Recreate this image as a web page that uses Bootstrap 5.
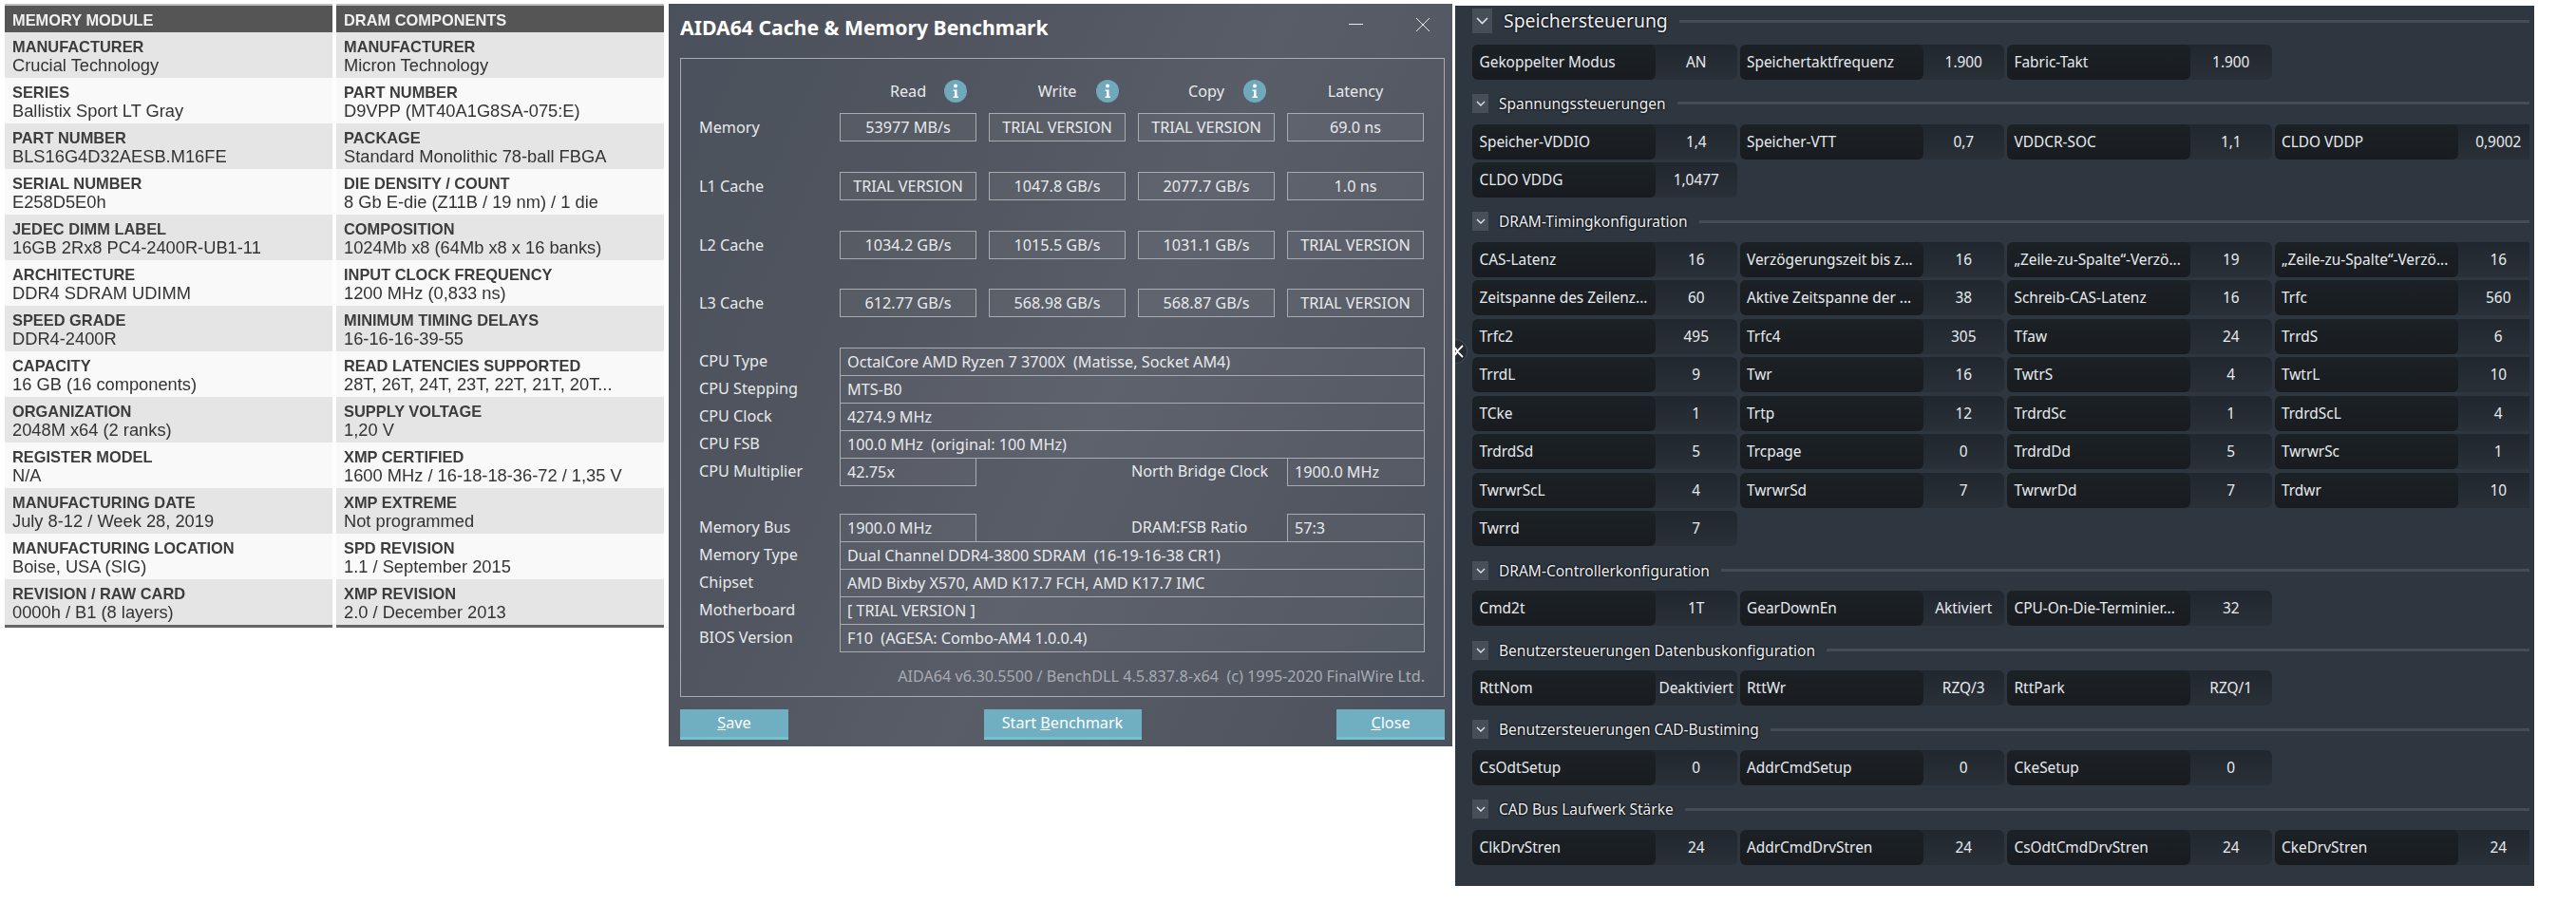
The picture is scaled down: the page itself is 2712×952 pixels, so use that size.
<!DOCTYPE html>
<html lang="de">
<head>
<meta charset="utf-8">
<title>Memory</title>
<link href="https://cdn.jsdelivr.net/npm/bootstrap@5.3.0/dist/css/bootstrap.min.css" rel="stylesheet">
<style>
body{background:#fff;margin:0;width:2712px;height:952px;overflow:hidden}
.spec-wrap{width:694px;margin:4px 0 0 5px;gap:4px;font-family:"Liberation Sans",Arial,sans-serif;flex:none;filter:blur(.35px)}
.spec-col{width:345px;flex:none}
.spec-head{height:30px;background:#555;color:#f0f0f0;font-weight:700;font-size:16.4px;line-height:30px;padding-left:8px;border-top:2px solid #bdbdbd}
.spec-row{height:48px;padding:5px 0 0 8px;color:#333;background:#f9f9f9;font-size:18.3px;line-height:20px;white-space:nowrap}
.spec-row:nth-child(odd){background:#e5e5e5}
.spec-row b{display:block;font-size:16.4px;color:#3c3c3c}
.spec-foot{height:3px;background:#666}
.win{width:825px;height:782px;margin:4px 0 0 5px;flex:none;background:linear-gradient(115deg,#4b515c 0%,#50555f 30%,#595d68 55%,#4b515c 100%);color:#e8eaec;font-family:"Noto Sans",sans-serif;font-size:16.2px}
.win-bar{height:57px;padding:0 23px 0 12px}
.win-title{font-size:21.2px;font-weight:700;color:#fff;line-height:50px;margin-top:-7px}
.win-ctrl{margin-top:-14px;gap:55px}
.win-panel{width:805px;height:673px;margin-left:12px;border:1px solid #a9abb1;padding:16px 20px 0 19px}
.bm-grid{display:grid;grid-template-columns:135px repeat(4,144px);column-gap:13px}
.bm-head{height:36px;display:grid;grid-template-columns:1fr auto 1fr;align-items:center;text-align:center;margin-bottom:5px}
.bm-head svg{justify-self:end}
.ic-a svg{margin-right:10px}.ic-b svg{margin-right:7px}.ic-c svg{margin-right:9px}
.bm-row{height:30px;margin-bottom:32px;align-items:center}
.bm-row.tight{margin-bottom:31px}
.bm-box{height:30px;line-height:28px;border:1px solid #a9abb1;background:rgba(255,255,255,.045);text-align:center;white-space:nowrap}
.bm-lab{line-height:30px}
.info-row{display:grid;grid-template-columns:135px 144px 1fr 145px;column-gap:13px;height:30px;margin-bottom:-1px;line-height:28px}
.info-box{border:1px solid #a9abb1;background:rgba(255,255,255,.035);padding-left:7px;height:30px}
.info-wide{grid-column:2 / 5}
.info-side{padding-left:150px;white-space:nowrap}
.info-gap{height:30px}
.win-note{color:#a8abb1;text-align:right;margin-top:11px;line-height:30px}
.win-btns{margin:13px 8px 0 12px;height:32px}
.win-btn{background:#70aec1;border-bottom:3px solid #72c3d0;color:#fff;height:32px;line-height:28px;text-align:center;width:114px}
.win-btn.wide{width:166px}
.mb-panel{width:1136px;height:927px;margin:6px 0 0 3px;padding:3px 5px 0 18px;flex:none;background:#2e3640;color:#e8ebee;font-family:"Noto Sans",sans-serif;font-size:15.4px;overflow:hidden}
.sec-head{height:20px;margin-top:15.2px}
.sec-head.big{height:26px;margin-top:0}
.sec-chev{width:17px;height:20px;background:#464e58;flex:none}
.big .sec-chev{width:21px;height:26px}
.sec-title{margin:0 12px 0 11px;font-size:15.5px;color:#eef0f2;text-shadow:0 0 2px #000,0 0 2px #000;line-height:20px}
.big .sec-title{font-size:19.4px;margin-left:12px}
.sec-rule{height:3px;background:#444c57;flex:1 1 auto}
.cell-grid{display:grid;grid-template-columns:repeat(4,278.5px);gap:3.5px 3px;margin-top:11.7px;overflow:hidden}
.cellx{height:37px;display:flex;border-radius:6px;background:linear-gradient(#21272e,#2a3037);line-height:37px;white-space:nowrap}
.cellx-l{width:193px;flex:none;padding-left:7.5px;border-radius:6px;background:linear-gradient(#1c2126,#181c20);overflow:hidden}
.cellx-v{flex:1 1 auto;text-align:center}
.tab-knob{position:absolute;left:1532px;top:357px;width:13px;height:26px;border-radius:0 13px 13px 0;background:#262c33;border:1px solid #454c55;border-left:0}
</style>
</head>
<body>
<div class="d-flex align-items-start">
  <div class="spec-wrap d-flex">
    <div class="spec-col">
      <div class="spec-head">MEMORY MODULE</div>
      <div>
        <div class="spec-row"><b>MANUFACTURER</b>Crucial Technology</div>
        <div class="spec-row"><b>SERIES</b>Ballistix Sport LT Gray</div>
        <div class="spec-row"><b>PART NUMBER</b>BLS16G4D32AESB.M16FE</div>
        <div class="spec-row"><b>SERIAL NUMBER</b>E258D5E0h</div>
        <div class="spec-row"><b>JEDEC DIMM LABEL</b>16GB 2Rx8 PC4-2400R-UB1-11</div>
        <div class="spec-row"><b>ARCHITECTURE</b>DDR4 SDRAM UDIMM</div>
        <div class="spec-row"><b>SPEED GRADE</b>DDR4-2400R</div>
        <div class="spec-row"><b>CAPACITY</b>16 GB (16 components)</div>
        <div class="spec-row"><b>ORGANIZATION</b>2048M x64 (2 ranks)</div>
        <div class="spec-row"><b>REGISTER MODEL</b>N/A</div>
        <div class="spec-row"><b>MANUFACTURING DATE</b>July 8-12 / Week 28, 2019</div>
        <div class="spec-row"><b>MANUFACTURING LOCATION</b>Boise, USA (SIG)</div>
        <div class="spec-row"><b>REVISION / RAW CARD</b>0000h / B1 (8 layers)</div>
      </div>
      <div class="spec-foot"></div>
    </div>
    <div class="spec-col">
      <div class="spec-head">DRAM COMPONENTS</div>
      <div>
        <div class="spec-row"><b>MANUFACTURER</b>Micron Technology</div>
        <div class="spec-row"><b>PART NUMBER</b>D9VPP (MT40A1G8SA-075:E)</div>
        <div class="spec-row"><b>PACKAGE</b>Standard Monolithic 78-ball FBGA</div>
        <div class="spec-row"><b>DIE DENSITY / COUNT</b>8 Gb E-die (Z11B / 19 nm) / 1 die</div>
        <div class="spec-row"><b>COMPOSITION</b>1024Mb x8 (64Mb x8 x 16 banks)</div>
        <div class="spec-row"><b>INPUT CLOCK FREQUENCY</b>1200 MHz (0,833 ns)</div>
        <div class="spec-row"><b>MINIMUM TIMING DELAYS</b>16-16-16-39-55</div>
        <div class="spec-row"><b>READ LATENCIES SUPPORTED</b>28T, 26T, 24T, 23T, 22T, 21T, 20T...</div>
        <div class="spec-row"><b>SUPPLY VOLTAGE</b>1,20 V</div>
        <div class="spec-row"><b>XMP CERTIFIED</b>1600 MHz / 16-18-18-36-72 / 1,35 V</div>
        <div class="spec-row"><b>XMP EXTREME</b>Not programmed</div>
        <div class="spec-row"><b>SPD REVISION</b>1.1 / September 2015</div>
        <div class="spec-row"><b>XMP REVISION</b>2.0 / December 2013</div>
      </div>
      <div class="spec-foot"></div>
    </div>
  </div>

  <div class="win">
    <div class="win-bar d-flex justify-content-between align-items-center">
      <div class="win-title">AIDA64 Cache &amp; Memory Benchmark</div>
      <div class="win-ctrl d-flex align-items-center">
        <svg width="15" height="15" viewBox="0 0 15 15"><path d="M0 7.5H15" stroke="#e8eaec" stroke-width="1"/></svg>
        <svg width="16" height="16" viewBox="0 0 16 16"><path d="M1 1L15 15M15 1L1 15" stroke="#e8eaec" stroke-width="1" fill="none"/></svg>
      </div>
    </div>
    <div class="win-panel">
      <div class="bm-grid">
        <div></div>
        <div class="bm-head ic-a"><span></span><span>Read</span><svg width="24" height="24" viewBox="0 0 24 24"><circle cx="12" cy="12" r="12" fill="#6fa9bb"/><circle cx="12" cy="6.5" r="2" fill="#fff"/><path d="M9.5 10.5H13.5V17.5H15V19H9.5V17.5H11V12H9.5Z" fill="#fff"/></svg></div>
        <div class="bm-head ic-b"><span></span><span>Write</span><svg width="24" height="24" viewBox="0 0 24 24"><circle cx="12" cy="12" r="12" fill="#6fa9bb"/><circle cx="12" cy="6.5" r="2" fill="#fff"/><path d="M9.5 10.5H13.5V17.5H15V19H9.5V17.5H11V12H9.5Z" fill="#fff"/></svg></div>
        <div class="bm-head ic-c"><span></span><span>Copy</span><svg width="24" height="24" viewBox="0 0 24 24"><circle cx="12" cy="12" r="12" fill="#6fa9bb"/><circle cx="12" cy="6.5" r="2" fill="#fff"/><path d="M9.5 10.5H13.5V17.5H15V19H9.5V17.5H11V12H9.5Z" fill="#fff"/></svg></div>
        <div class="bm-head"><span></span><span>Latency</span><span></span></div>
      </div>
      <div class="bm-grid bm-row"><div class="bm-lab">Memory</div><div class="bm-box">53977 MB/s</div><div class="bm-box">TRIAL VERSION</div><div class="bm-box">TRIAL VERSION</div><div class="bm-box">69.0 ns</div></div>
      <div class="bm-grid bm-row"><div class="bm-lab">L1 Cache</div><div class="bm-box">TRIAL VERSION</div><div class="bm-box">1047.8 GB/s</div><div class="bm-box">2077.7 GB/s</div><div class="bm-box">1.0 ns</div></div>
      <div class="bm-grid bm-row tight"><div class="bm-lab">L2 Cache</div><div class="bm-box">1034.2 GB/s</div><div class="bm-box">1015.5 GB/s</div><div class="bm-box">1031.1 GB/s</div><div class="bm-box">TRIAL VERSION</div></div>
      <div class="bm-grid bm-row"><div class="bm-lab">L3 Cache</div><div class="bm-box">612.77 GB/s</div><div class="bm-box">568.98 GB/s</div><div class="bm-box">568.87 GB/s</div><div class="bm-box">TRIAL VERSION</div></div>

      <div class="info-row"><div>CPU Type</div><div class="info-box info-wide">OctalCore AMD Ryzen 7 3700X&nbsp; (Matisse, Socket AM4)</div></div>
      <div class="info-row"><div>CPU Stepping</div><div class="info-box info-wide">MTS-B0</div></div>
      <div class="info-row"><div>CPU Clock</div><div class="info-box info-wide">4274.9 MHz</div></div>
      <div class="info-row"><div>CPU FSB</div><div class="info-box info-wide">100.0 MHz&nbsp; (original: 100 MHz)</div></div>
      <div class="info-row"><div>CPU Multiplier</div><div class="info-box">42.75x</div><div class="info-side">North Bridge Clock</div><div class="info-box">1900.0 MHz</div></div>
      <div class="info-gap"></div>
      <div class="info-row"><div>Memory Bus</div><div class="info-box">1900.0 MHz</div><div class="info-side">DRAM:FSB Ratio</div><div class="info-box">57:3</div></div>
      <div class="info-row"><div>Memory Type</div><div class="info-box info-wide">Dual Channel DDR4-3800 SDRAM&nbsp; (16-19-16-38 CR1)</div></div>
      <div class="info-row"><div>Chipset</div><div class="info-box info-wide">AMD Bixby X570, AMD K17.7 FCH, AMD K17.7 IMC</div></div>
      <div class="info-row"><div>Motherboard</div><div class="info-box info-wide">[ TRIAL VERSION ]</div></div>
      <div class="info-row"><div>BIOS Version</div><div class="info-box info-wide">F10&nbsp; (AGESA: Combo-AM4 1.0.0.4)</div></div>
      <div class="win-note">AIDA64 v6.30.5500 / BenchDLL 4.5.837.8-x64&nbsp; (c) 1995-2020 FinalWire Ltd.</div>
    </div>
    <div class="win-btns d-flex justify-content-between">
      <div class="win-btn"><u>S</u>ave</div>
      <div class="win-btn wide">Start <u>B</u>enchmark</div>
      <div class="win-btn"><u>C</u>lose</div>
    </div>
  </div>

  <div class="mb-panel">
    <div class="sec-head big d-flex align-items-center"><span class="sec-chev d-flex align-items-center justify-content-center"><svg width="13" height="8" viewBox="0 0 13 8"><path d="M1 1L6.5 6.5L12 1" stroke="#dfe2e5" stroke-width="1.6" fill="none"/></svg></span><span class="sec-title">Speichersteuerung</span><span class="sec-rule"></span></div>
    <div class="cell-grid">
      <div class="cellx"><span class="cellx-l">Gekoppelter Modus</span><span class="cellx-v">AN</span></div>
      <div class="cellx"><span class="cellx-l">Speichertaktfrequenz</span><span class="cellx-v">1.900</span></div>
      <div class="cellx"><span class="cellx-l">Fabric-Takt</span><span class="cellx-v">1.900</span></div>
    </div>
    <div class="sec-head d-flex align-items-center"><span class="sec-chev d-flex align-items-center justify-content-center"><svg width="10" height="6" viewBox="0 0 10 6"><path d="M1 1L5 5L9 1" stroke="#dfe2e5" stroke-width="1.4" fill="none"/></svg></span><span class="sec-title">Spannungssteuerungen</span><span class="sec-rule"></span></div>
    <div class="cell-grid">
      <div class="cellx"><span class="cellx-l">Speicher-VDDIO</span><span class="cellx-v">1,4</span></div>
      <div class="cellx"><span class="cellx-l">Speicher-VTT</span><span class="cellx-v">0,7</span></div>
      <div class="cellx"><span class="cellx-l">VDDCR-SOC</span><span class="cellx-v">1,1</span></div>
      <div class="cellx"><span class="cellx-l">CLDO VDDP</span><span class="cellx-v">0,9002</span></div>
      <div class="cellx"><span class="cellx-l">CLDO VDDG</span><span class="cellx-v">1,0477</span></div>
    </div>
    <div class="sec-head d-flex align-items-center"><span class="sec-chev d-flex align-items-center justify-content-center"><svg width="10" height="6" viewBox="0 0 10 6"><path d="M1 1L5 5L9 1" stroke="#dfe2e5" stroke-width="1.4" fill="none"/></svg></span><span class="sec-title">DRAM-Timingkonfiguration</span><span class="sec-rule"></span></div>
    <div class="cell-grid">
      <div class="cellx"><span class="cellx-l">CAS-Latenz</span><span class="cellx-v">16</span></div>
      <div class="cellx"><span class="cellx-l">Verzögerungszeit bis z...</span><span class="cellx-v">16</span></div>
      <div class="cellx"><span class="cellx-l">„Zeile-zu-Spalte“-Verzö...</span><span class="cellx-v">19</span></div>
      <div class="cellx"><span class="cellx-l">„Zeile-zu-Spalte“-Verzö...</span><span class="cellx-v">16</span></div>
      <div class="cellx"><span class="cellx-l">Zeitspanne des Zeilenz...</span><span class="cellx-v">60</span></div>
      <div class="cellx"><span class="cellx-l">Aktive Zeitspanne der ...</span><span class="cellx-v">38</span></div>
      <div class="cellx"><span class="cellx-l">Schreib-CAS-Latenz</span><span class="cellx-v">16</span></div>
      <div class="cellx"><span class="cellx-l">Trfc</span><span class="cellx-v">560</span></div>
      <div class="cellx"><span class="cellx-l">Trfc2</span><span class="cellx-v">495</span></div>
      <div class="cellx"><span class="cellx-l">Trfc4</span><span class="cellx-v">305</span></div>
      <div class="cellx"><span class="cellx-l">Tfaw</span><span class="cellx-v">24</span></div>
      <div class="cellx"><span class="cellx-l">TrrdS</span><span class="cellx-v">6</span></div>
      <div class="cellx"><span class="cellx-l">TrrdL</span><span class="cellx-v">9</span></div>
      <div class="cellx"><span class="cellx-l">Twr</span><span class="cellx-v">16</span></div>
      <div class="cellx"><span class="cellx-l">TwtrS</span><span class="cellx-v">4</span></div>
      <div class="cellx"><span class="cellx-l">TwtrL</span><span class="cellx-v">10</span></div>
      <div class="cellx"><span class="cellx-l">TCke</span><span class="cellx-v">1</span></div>
      <div class="cellx"><span class="cellx-l">Trtp</span><span class="cellx-v">12</span></div>
      <div class="cellx"><span class="cellx-l">TrdrdSc</span><span class="cellx-v">1</span></div>
      <div class="cellx"><span class="cellx-l">TrdrdScL</span><span class="cellx-v">4</span></div>
      <div class="cellx"><span class="cellx-l">TrdrdSd</span><span class="cellx-v">5</span></div>
      <div class="cellx"><span class="cellx-l">Trcpage</span><span class="cellx-v">0</span></div>
      <div class="cellx"><span class="cellx-l">TrdrdDd</span><span class="cellx-v">5</span></div>
      <div class="cellx"><span class="cellx-l">TwrwrSc</span><span class="cellx-v">1</span></div>
      <div class="cellx"><span class="cellx-l">TwrwrScL</span><span class="cellx-v">4</span></div>
      <div class="cellx"><span class="cellx-l">TwrwrSd</span><span class="cellx-v">7</span></div>
      <div class="cellx"><span class="cellx-l">TwrwrDd</span><span class="cellx-v">7</span></div>
      <div class="cellx"><span class="cellx-l">Trdwr</span><span class="cellx-v">10</span></div>
      <div class="cellx"><span class="cellx-l">Twrrd</span><span class="cellx-v">7</span></div>
    </div>
    <div class="sec-head d-flex align-items-center"><span class="sec-chev d-flex align-items-center justify-content-center"><svg width="10" height="6" viewBox="0 0 10 6"><path d="M1 1L5 5L9 1" stroke="#dfe2e5" stroke-width="1.4" fill="none"/></svg></span><span class="sec-title">DRAM-Controllerkonfiguration</span><span class="sec-rule"></span></div>
    <div class="cell-grid">
      <div class="cellx"><span class="cellx-l">Cmd2t</span><span class="cellx-v">1T</span></div>
      <div class="cellx"><span class="cellx-l">GearDownEn</span><span class="cellx-v">Aktiviert</span></div>
      <div class="cellx"><span class="cellx-l">CPU-On-Die-Terminier...</span><span class="cellx-v">32</span></div>
    </div>
    <div class="sec-head d-flex align-items-center"><span class="sec-chev d-flex align-items-center justify-content-center"><svg width="10" height="6" viewBox="0 0 10 6"><path d="M1 1L5 5L9 1" stroke="#dfe2e5" stroke-width="1.4" fill="none"/></svg></span><span class="sec-title">Benutzersteuerungen Datenbuskonfiguration</span><span class="sec-rule"></span></div>
    <div class="cell-grid">
      <div class="cellx"><span class="cellx-l">RttNom</span><span class="cellx-v">Deaktiviert</span></div>
      <div class="cellx"><span class="cellx-l">RttWr</span><span class="cellx-v">RZQ/3</span></div>
      <div class="cellx"><span class="cellx-l">RttPark</span><span class="cellx-v">RZQ/1</span></div>
    </div>
    <div class="sec-head d-flex align-items-center"><span class="sec-chev d-flex align-items-center justify-content-center"><svg width="10" height="6" viewBox="0 0 10 6"><path d="M1 1L5 5L9 1" stroke="#dfe2e5" stroke-width="1.4" fill="none"/></svg></span><span class="sec-title">Benutzersteuerungen CAD-Bustiming</span><span class="sec-rule"></span></div>
    <div class="cell-grid">
      <div class="cellx"><span class="cellx-l">CsOdtSetup</span><span class="cellx-v">0</span></div>
      <div class="cellx"><span class="cellx-l">AddrCmdSetup</span><span class="cellx-v">0</span></div>
      <div class="cellx"><span class="cellx-l">CkeSetup</span><span class="cellx-v">0</span></div>
    </div>
    <div class="sec-head d-flex align-items-center"><span class="sec-chev d-flex align-items-center justify-content-center"><svg width="10" height="6" viewBox="0 0 10 6"><path d="M1 1L5 5L9 1" stroke="#dfe2e5" stroke-width="1.4" fill="none"/></svg></span><span class="sec-title">CAD Bus Laufwerk Stärke</span><span class="sec-rule"></span></div>
    <div class="cell-grid">
      <div class="cellx"><span class="cellx-l">ClkDrvStren</span><span class="cellx-v">24</span></div>
      <div class="cellx"><span class="cellx-l">AddrCmdDrvStren</span><span class="cellx-v">24</span></div>
      <div class="cellx"><span class="cellx-l">CsOdtCmdDrvStren</span><span class="cellx-v">24</span></div>
      <div class="cellx"><span class="cellx-l">CkeDrvStren</span><span class="cellx-v">24</span></div>
    </div>
  </div>
</div>
<div class="tab-knob d-flex align-items-center"><svg width="9" height="14" viewBox="0 0 9 14"><path d="M8 1L2 7L8 13M0 3L2 7L0 11" stroke="#fff" stroke-width="1.8" fill="none"/></svg></div>
<script src="https://cdn.jsdelivr.net/npm/bootstrap@5.3.0/dist/js/bootstrap.bundle.min.js"></script>
</body>
</html>
